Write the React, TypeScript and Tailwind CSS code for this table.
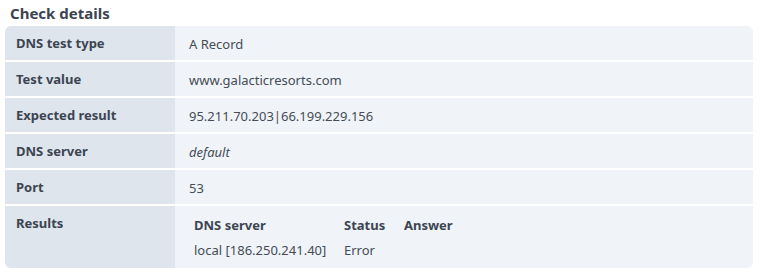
const rows: { label: string; value: React.ReactNode }[] = [
    { label: 'DNS test type', value: 'A Record' },
    { label: 'Test value', value: 'www.galacticresorts.com' },
    { label: 'Expected result', value: '95.211.70.203|66.199.229.156' },
    { label: 'DNS server', value: <span className="italic">default</span> },
    { label: 'Port', value: '53' },
];

const App = () => {
    return (
        <div
            className="w-[760px] h-[273px] bg-white text-[13px] text-[#454c56]"
            style={{ fontFamily: '"Noto Sans", "Open Sans", sans-serif' }}
        >
            <h2 className="pl-[10px] pt-[3px] h-[26px] text-[15px] font-bold leading-[20px] text-[#3c4451]">
                Check details
            </h2>

            <div className="ml-[5px] w-[748px] rounded-[6px] overflow-hidden flex flex-col gap-[2px]">
                {rows.map((row) => (
                    <div key={row.label} className="flex h-[34px]">
                        <div className="w-[170px] bg-[#dee5ec] pl-[11px] pt-[2px] flex items-center font-bold text-[#3c4451]">
                            {row.label}
                        </div>
                        <div className="flex-1 bg-[#f0f4f8] pl-[14px] pt-[3px] flex items-center">{row.value}</div>
                    </div>
                ))}

                {/* Results row */}
                <div className="flex h-[62px]">
                    <div className="w-[170px] bg-[#dee5ec] pl-[11px] pt-[8px] font-bold text-[#3c4451]">
                        Results
                    </div>
                    <div className="flex-1 bg-[#f0f4f8] pl-[19px] pt-[10px]">
                        <div className="grid grid-cols-[150px_60px_1fr] gap-y-[6px] leading-[19px]">
                            <div className="font-bold text-[#3c4451]">DNS server</div>
                            <div className="font-bold text-[#3c4451]">Status</div>
                            <div className="font-bold text-[#3c4451]">Answer</div>
                            <div>local [186.250.241.40]</div>
                            <div>Error</div>
                            <div></div>
                        </div>
                    </div>
                </div>
            </div>
        </div>
    );
};

export default App;
